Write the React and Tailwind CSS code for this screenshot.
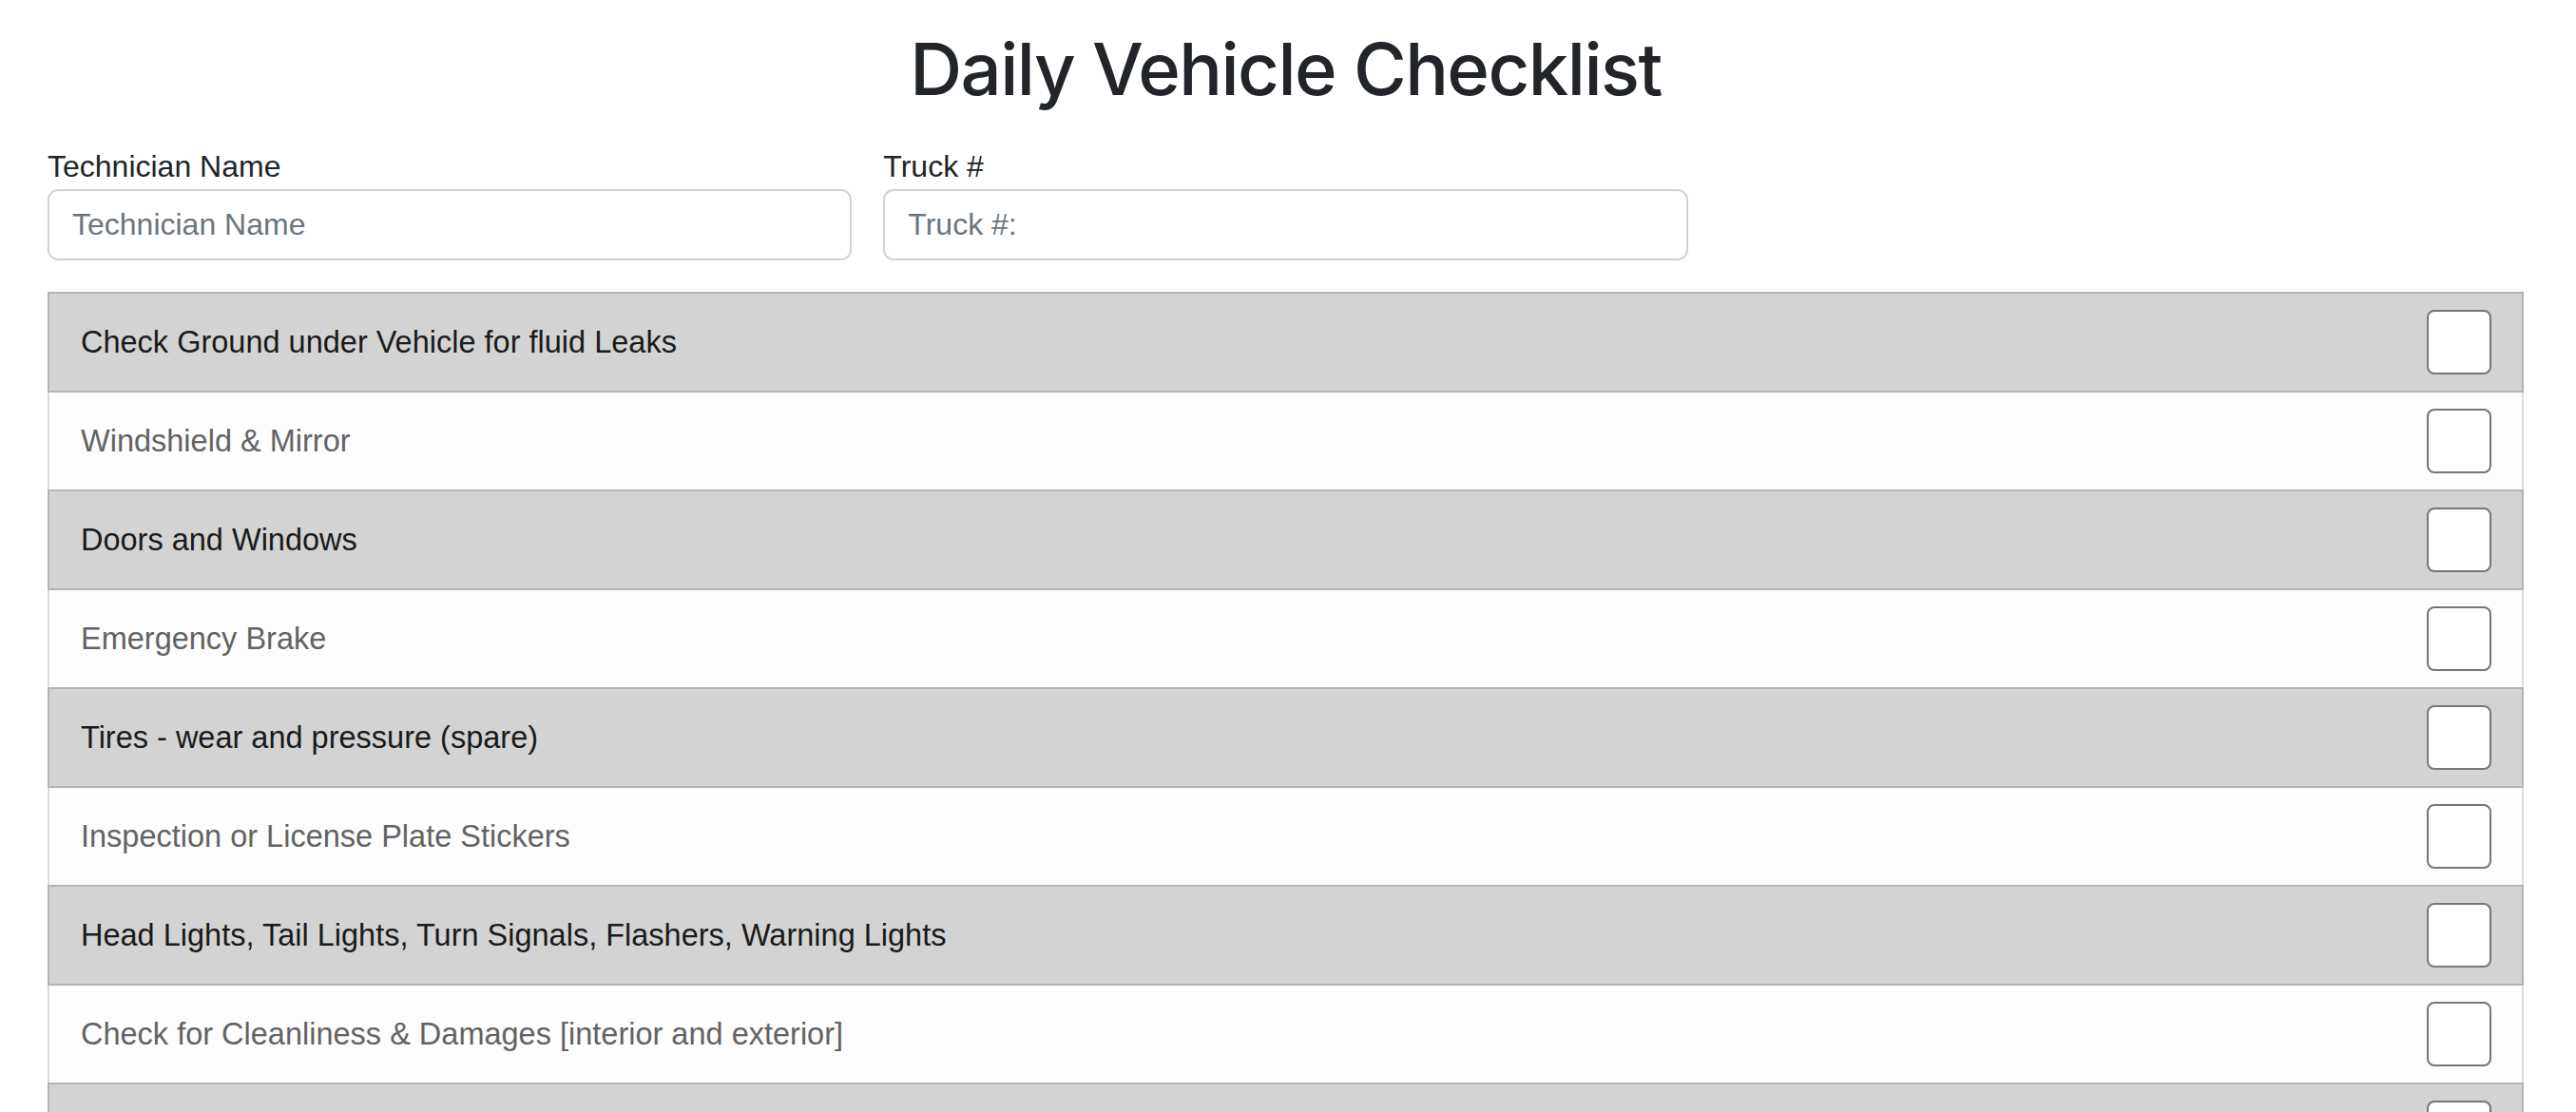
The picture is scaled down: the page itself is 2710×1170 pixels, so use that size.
import React, { useState } from 'react';

const items = [
  'Check Ground under Vehicle for fluid Leaks',
  'Windshield & Mirror',
  'Doors and Windows',
  'Emergency Brake',
  'Tires - wear and pressure (spare)',
  'Inspection or License Plate Stickers',
  'Head Lights, Tail Lights, Turn Signals, Flashers, Warning Lights',
  'Check for Cleanliness & Damages [interior and exterior]',
  'Fluid Levels - oil, coolant, washer fluid',
  'Horn and Wipers',
];

const App = () => {
  const [tech, setTech] = useState('');
  const [truck, setTruck] = useState('');
  const [checked, setChecked] = useState({});

  const toggle = (i) => setChecked((prev) => ({ ...prev, [i]: !prev[i] }));

  return (
    <div className="min-h-screen bg-white pl-[50px] pr-[55px] pt-[24px] text-[#212529] font-['Liberation_Sans',Arial,sans-serif]">
      {/* Header */}
      <h1 className="text-center text-[76px] leading-[96px] font-medium tracking-[-0.02em] text-[#212529] mb-[31px] font-['Inter','Liberation_Sans',sans-serif]">
        Daily Vehicle Checklist
      </h1>

      {/* Technician / truck fields */}
      <div className="grid grid-cols-3 gap-x-[33px]">
        <div>
          <label className="block text-[32px] leading-[48px]">Technician Name</label>
          <input
            type="text"
            value={tech}
            onChange={(e) => setTech(e.target.value)}
            placeholder="Technician Name"
            className="w-full h-[75px] px-[24px] text-[32px] border-2 border-[#ced4da] rounded-[11px] bg-white placeholder:text-[#6c757d] outline-none"
          />
        </div>
        <div>
          <label className="block text-[32px] leading-[48px]">Truck #</label>
          <input
            type="text"
            value={truck}
            onChange={(e) => setTruck(e.target.value)}
            placeholder="Truck #:"
            className="w-full h-[75px] px-[24px] text-[32px] border-2 border-[#ced4da] rounded-[11px] bg-white placeholder:text-[#6c757d] outline-none"
          />
        </div>
      </div>

      {/* Checklist */}
      <div className="mt-[33px]">
        {items.map((item, i) => {
          const grey = i % 2 === 0;
          return (
            <div
              key={i}
              className={
                grey
                  ? 'flex items-center justify-between h-[106px] pl-[33px] pr-[32px] bg-[#d3d3d3] border-2 border-[#b4b4b4] text-[#1a1a1a]'
                  : 'flex items-center justify-between h-[102px] pl-[33px] pr-[32px] bg-[#fdfdfd] border-x-2 border-[#dcdcdc] text-[#636363]'
              }
            >
              <span className="text-[32.5px]">{item}</span>
              <input
                type="checkbox"
                checked={!!checked[i]}
                onChange={() => toggle(i)}
                className="appearance-none w-[68px] h-[68px] bg-white border-2 border-[#767676] rounded-[8px] checked:bg-[#0d6efd] checked:border-[#0d6efd]"
              />
            </div>
          );
        })}
      </div>
    </div>
  );
};

export default App;
